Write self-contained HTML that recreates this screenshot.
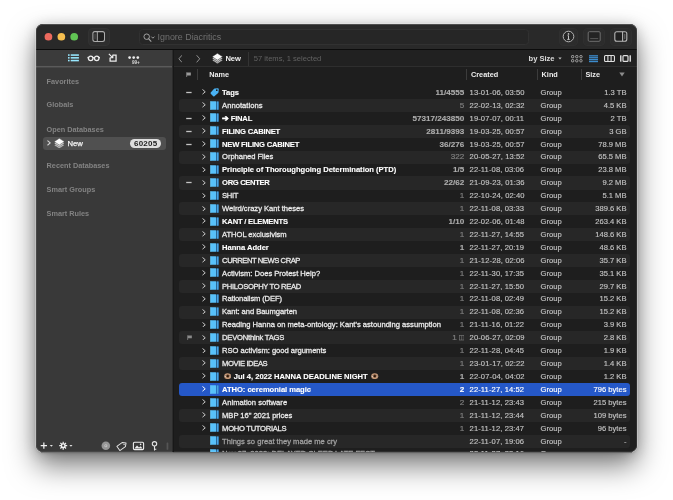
<!DOCTYPE html>
<html lang="en">
<head>
<meta charset="utf-8">
<title>DEVONthink — New</title>
<style>
html,body{margin:0;padding:0;background:#fff;}
body{width:673px;height:500px;overflow:hidden;position:relative;font-family:"Liberation Sans",sans-serif;font-size:7.6px;color:#e6e6e6;-webkit-font-smoothing:antialiased;}
#shadow{position:absolute;left:36px;top:24px;width:601px;height:428px;border-radius:7px;
  box-shadow:0 0 0 0.8px rgba(255,255,255,.38), 0 1px 3px rgba(0,0,0,.18), 0 14px 29px rgba(0,0,0,.50), 0 2px 13px rgba(0,0,0,.19);}
#win{will-change:transform;position:absolute;left:36px;top:24px;width:601px;height:428px;border-radius:7px;overflow:hidden;background:#1e1e1e;}
#title{position:absolute;left:0;top:0;width:601px;height:25px;background:#292929;border-bottom:1px solid #0c0c0c;box-sizing:content-box;}
.tl{position:absolute;top:8.9px;width:7.7px;height:7.7px;border-radius:50%;}
#side{position:absolute;left:0;top:26px;width:136px;height:402px;background:#393939;}
#sidebar-tools{position:absolute;left:0;top:0;width:136px;height:18px;background:linear-gradient(#3b3b3b,#3b3b3b) no-repeat 0 0/100% 16.5px;}
.sec{position:absolute;left:10.6px;font-weight:bold;font-size:7.3px;color:#838383;white-space:nowrap;line-height:10px;}
#main{position:absolute;left:136px;top:26px;width:465px;height:402px;background:#1e1e1e;}
#pathbar{position:absolute;left:0;top:0;width:465px;height:16.3px;background:#212121;box-shadow:0 1px 0 #2e2e2e;}
#hdr{position:absolute;left:0;top:18px;width:465px;height:15px;}
.hd{position:absolute;top:0.4px;line-height:13px;font-weight:bold;font-size:7.3px;color:#ececec;white-space:nowrap;}
.vsep{position:absolute;top:1px;width:1px;height:10.8px;background:#3c3c3c;}
.row{position:absolute;left:143.4px;width:450.4px;height:13.1px;line-height:12.3px;border-radius:3px;white-space:nowrap;color:#eaeaea;}
.row.alt{background:#272727;}
.row.sel{background:#2558c8;color:#fff;}
.row.sel .chev path{stroke:#fff;}
.row.dim{color:#a0a0a0;}
.row.last span{top:0.2px;}
.row span{position:absolute;top:0.85px;}
.dash{position:absolute;left:6.4px;top:4.85px;}
.chev{position:absolute;left:22.9px;top:3.3px;}
.rflag{position:absolute;left:7.2px;top:3.7px;}
.ic{position:absolute;left:30.8px;top:1.6px;}
.grp{width:9px;height:9.4px;top:1.8px !important;background:linear-gradient(90deg,#55b7f3 0,#55b7f3 62%,#2f86cd 62%,#3c97dc 100%);border-radius:1px;}
.nm{left:42.7px;-webkit-text-stroke:0.28px currentColor;}
.nm.b{-webkit-text-stroke:0.12px currentColor;}
.b{font-weight:bold;color:#fff;}
.cnt{right:165.6px;color:#7e7e7e;font-size:8.1px;-webkit-text-stroke:0.2px currentColor;}
.cnt.cb{color:#adadad;font-weight:bold;-webkit-text-stroke:0.12px currentColor;}
.row.sel .cnt{color:#fff;}
.cr{left:290.2px;color:#c2c2c2;letter-spacing:0.1px;-webkit-text-stroke:0.15px currentColor;}
.kd{left:361.2px;color:#c2c2c2;-webkit-text-stroke:0.15px currentColor;}
.sz{right:3.3px;color:#c2c2c2;-webkit-text-stroke:0.15px currentColor;}
.row.sel .cr,.row.sel .kd,.row.sel .sz{color:#fff;}
.eye{vertical-align:-0.5px;margin:0 0.7px 0 1.5px;}
.cbox{vertical-align:-0.4px;margin-left:2px;}
</style>
</head>
<body>
<div id="shadow"></div>
<div style="position:absolute;left:41px;top:452px;width:132px;height:1px;background:rgba(57,57,57,.45)"></div>
<div style="position:absolute;left:173px;top:452px;width:459px;height:1px;background:rgba(30,30,30,.45)"></div>
<div id="win">
  <div id="title">
    <svg style="position:absolute;left:0;top:0" width="50" height="25" viewBox="0 0 50 25"><circle cx="12.45" cy="12.75" r="3.85" fill="#ed6a5e"/><circle cx="25.35" cy="12.75" r="3.85" fill="#f5be4f"/><circle cx="38.2" cy="12.75" r="3.85" fill="#61c454"/></svg>
    <!-- sidebar toggle -->
    <svg style="position:absolute;left:52px;top:4px" width="22" height="18" viewBox="0 0 22 18"><rect x="0.5" y="0.5" width="21" height="17" rx="3.5" fill="#2e2e2e" stroke="#323232"/><rect x="4.9" y="3.6" width="11.6" height="9.8" rx="2" fill="#202020" stroke="#acacac" stroke-width="1.05"/><path d="M9.3 3.6 L9.3 13.4" stroke="#acacac" stroke-width="1.05"/><path d="M7 5.6 L7 11.4" stroke="#6a6a6a" stroke-width="0.8"/></svg>
    <!-- search field -->
    <div style="position:absolute;left:102.8px;top:4.8px;width:390.4px;height:16.2px;border-radius:3.5px;background:#262626;border:1px solid #313131;box-sizing:border-box;"></div>
    <svg style="position:absolute;left:106.6px;top:8.6px" width="14" height="10" viewBox="0 0 14 10"><circle cx="3.7" cy="3.7" r="2.75" fill="none" stroke="#a8a8a8" stroke-width="0.95"/><path d="M5.7 5.8 L8 8.3" stroke="#a8a8a8" stroke-width="1.05" stroke-linecap="round"/><path d="M8.6 3.9 L9.9 5.2 L11.2 3.9" fill="none" stroke="#a8a8a8" stroke-width="0.9" stroke-linecap="round" stroke-linejoin="round"/></svg>
    <span style="position:absolute;left:121.6px;top:6.9px;line-height:12px;font-size:8.9px;color:#707070;white-space:nowrap;">Ignore Diacritics</span>
    <!-- right buttons -->
    <svg style="position:absolute;left:523px;top:4px" width="19" height="18" viewBox="0 0 19 18"><rect x="0.5" y="0.5" width="18" height="17" rx="3.5" fill="#2c2c2c" stroke="#2f2f2f"/><circle cx="9.5" cy="8.5" r="5.3" fill="#262626" stroke="#b4b4b4" stroke-width="1"/><circle cx="9.5" cy="5.9" r="0.85" fill="#c4c4c4"/><path d="M9.5 7.6 L9.5 11.4 M8.3 11.4 L10.7 11.4 M8.6 7.7 L9.5 7.7" stroke="#c4c4c4" stroke-width="1"/></svg>
    <svg style="position:absolute;left:547px;top:4px" width="22" height="18" viewBox="0 0 22 18"><rect x="0.5" y="0.5" width="21" height="17" rx="3.5" fill="#2c2c2c" stroke="#2f2f2f"/><rect x="5.2" y="3.7" width="12" height="9.6" rx="1.2" fill="#232323" stroke="#6e6e6e" stroke-width="1"/><path d="M7.2 10.6 L15.2 10.6" stroke="#5c5c5c" stroke-width="0.9"/></svg>
    <svg style="position:absolute;left:574px;top:4px" width="22" height="18" viewBox="0 0 22 18"><rect x="0.5" y="0.5" width="21" height="17" rx="3.5" fill="#2c2c2c" stroke="#2f2f2f"/><rect x="4.8" y="3.7" width="12" height="9.6" rx="2" fill="#202020" stroke="#b6b6b6" stroke-width="1.1"/><path d="M12.6 3.7 L12.6 13.3" stroke="#b6b6b6" stroke-width="1.1"/><path d="M14.8 5.8 L14.8 11.2" stroke="#7a7a7a" stroke-width="0.9"/></svg>
  </div>

  <div id="side">
    <div id="sidebar-tools">
      <svg style="position:absolute;left:0;top:15px" width="136" height="4" viewBox="0 0 136 4"><rect x="0" y="0.95" width="136" height="1.5" fill="#5a5a5a"/></svg>
      <!-- list icon (active) -->
      <svg style="position:absolute;left:32px;top:3.6px" width="11" height="8" viewBox="0 0 11 8"><g fill="#98e8ff"><rect x="0" y="0.3" width="1.6" height="1.55"/><rect x="2.7" y="0.3" width="8.2" height="1.55"/><rect x="0" y="3.05" width="1.6" height="1.55"/><rect x="2.7" y="3.05" width="8.2" height="1.55"/><rect x="0" y="5.8" width="1.6" height="1.55"/><rect x="2.7" y="5.8" width="8.2" height="1.55"/></g></svg>
      <!-- glasses -->
      <svg style="position:absolute;left:51px;top:3.6px" width="14" height="8" viewBox="0 0 14 8"><g fill="none" stroke="#ececec" stroke-width="1.3"><circle cx="3.7" cy="4.3" r="2.25"/><circle cx="9.7" cy="4.3" r="2.25"/><path d="M5.8 3.9 Q6.7 3.2 7.6 3.9"/><path d="M1.5 3.8 L0.5 3.3 M11.9 3.8 L12.9 3.3"/></g></svg>
      <!-- import -->
      <svg style="position:absolute;left:72.3px;top:2.5px" width="9.6" height="9.6" viewBox="0 0 10 10"><g fill="none" stroke="#ececec" stroke-width="1.35"><path d="M5 2.2 L8.4 2.2 L8.4 8.4 L2.2 8.4 L2.2 5.2"/><path d="M0.9 0.9 L4.6 4.6 M1.8 5 L5 5 L5 1.8" stroke-width="1.2"/></g></svg>
      <!-- dots -->
      <svg style="position:absolute;left:92.2px;top:4.6px" width="13" height="9" viewBox="0 0 13 9"><g fill="#ececec"><circle cx="1.6" cy="2.6" r="1.35"/><circle cx="5.7" cy="2.6" r="1.35"/><circle cx="9.8" cy="2.6" r="1.35"/></g><text x="3.9" y="8.6" font-family="Liberation Sans, sans-serif" font-size="4.6" font-weight="bold" fill="#d8d8d8">99+</text></svg>
    </div>
    <div class="sec" style="top:26.6px">Favorites</div>
    <div class="sec" style="top:50.4px">Globals</div>
    <div class="sec" style="top:75.0px">Open Databases</div>
    <div style="position:absolute;left:6.6px;top:87.2px;width:123.2px;height:12.8px;border-radius:3px;background:#505050;"></div>
    <svg style="position:absolute;left:10.9px;top:90.4px" width="4.2" height="5.8" viewBox="0 0 8 10"><path d="M1.5 1 L6.2 5 L1.5 9" fill="none" stroke="#d4d4d4" stroke-width="2.1" stroke-linecap="round" stroke-linejoin="round"/></svg>
    <!-- db stack icon -->
    <svg style="position:absolute;left:17.7px;top:87.9px" width="10.6" height="10.6" viewBox="0 0 20 20"><g stroke-linejoin="round" stroke="#4c4c4c" stroke-width="1.0"><path d="M10 7.10 L19.9 13.50 L10 19.90 L0.1 13.50 Z" fill="#c8c8c8"/><path d="M10 3.80 L19.9 10.20 L10 16.60 L0.1 10.20 Z" fill="#dadada"/><path d="M10 0.50 L19.9 6.90 L10 13.30 L0.1 6.90 Z" fill="#fbfbfb"/></g></svg>
    <span style="position:absolute;left:31.4px;top:88.1px;line-height:12.8px;font-size:7.7px;color:#f4f4f4;-webkit-text-stroke:0.25px currentColor;white-space:nowrap;">New</span>
    <span style="position:absolute;left:94px;top:89.2px;width:31.4px;height:8.8px;border-radius:4.4px;background:#dedede;color:#1e1e1e;font-weight:bold;font-size:8px;line-height:9.2px;text-align:center;letter-spacing:0.25px;">60205</span>
    <div class="sec" style="top:110.9px">Recent Databases</div>
    <div class="sec" style="top:135.0px">Smart Groups</div>
    <div class="sec" style="top:159.0px">Smart Rules</div>

    <!-- bottom toolbar -->
    <svg style="position:absolute;left:3.6px;top:389.7px" width="130" height="12" viewBox="0 0 130 12">
      <g stroke="#f2f2f2" stroke-width="1.25" fill="none"><path d="M0.7 5.7 L7 5.7 M3.85 2.55 L3.85 8.85"/></g>
      <path d="M9.8 4.9 L12.9 4.9 L11.35 6.8 Z" fill="#e0e0e0"/>
      <g fill="#f0f0f0"><circle cx="23.2" cy="5.7" r="2.5"/><g stroke="#f0f0f0" stroke-width="1.2"><path d="M23.2 1.7 L23.2 9.7 M19.2 5.7 L27.2 5.7 M20.4 2.9 L26 8.5 M26 2.9 L20.4 8.5"/></g></g>
      <circle cx="23.2" cy="5.7" r="1.1" fill="#393939"/>
      <path d="M29.4 4.9 L32.5 4.9 L30.95 6.8 Z" fill="#e0e0e0"/>
      <circle cx="65.85" cy="5.8" r="4.3" fill="#959595"/><circle cx="65.85" cy="5.8" r="1.5" fill="#c6c6c6"/><circle cx="65.85" cy="5.8" r="0.55" fill="#6a6a6a"/>
      <g transform="translate(82.1 5.8) rotate(-35)"><path d="M-4.6 -2.6 L2.2 -2.6 L4.8 0 L2.2 2.6 L-4.6 2.6 Z" fill="none" stroke="#e0e0e0" stroke-width="1" stroke-linejoin="round"/><circle cx="2.4" cy="0" r="0.7" fill="#e0e0e0"/></g>
      <rect x="93.4" y="2.2" width="10.2" height="7.4" rx="1.2" fill="none" stroke="#ececec" stroke-width="1.1"/><path d="M94.4 8.6 L97 5.6 L99 7.4 L100.6 6.2 L102.6 8.6 Z" fill="#ececec"/><circle cx="100.6" cy="4.4" r="0.8" fill="#ececec"/>
      <circle cx="114.5" cy="3.8" r="2.2" fill="none" stroke="#e4e4e4" stroke-width="1.1"/><path d="M114.5 6 L114.5 10.4 M114.5 9.2 L116.3 9.2" stroke="#e4e4e4" stroke-width="1.1"/>
      <rect x="126.6" y="2.4" width="1.7" height="7.4" rx="0.6" fill="#555"/>
    </svg>
  </div>

  <div style="position:absolute;left:136px;top:26px;width:1px;height:402px;background:#2b2b2b;z-index:3"></div>
  <div style="position:absolute;left:137px;top:26px;width:1px;height:402px;background:#181818;z-index:3"></div>
  <div id="main">
    <div id="pathbar">
      <svg style="position:absolute;left:5.6px;top:5px" width="4.6" height="7.6" viewBox="0 0 8 14"><path d="M6.6 1 L1.4 7 L6.6 13" fill="none" stroke="#9a9a9a" stroke-width="1.7" stroke-linecap="round" stroke-linejoin="round"/></svg>
      <svg style="position:absolute;left:24px;top:5px" width="4.6" height="7.6" viewBox="0 0 8 14"><path d="M1.4 1 L6.6 7 L1.4 13" fill="none" stroke="#9a9a9a" stroke-width="1.7" stroke-linecap="round" stroke-linejoin="round"/></svg>
      <svg style="position:absolute;left:40.3px;top:3.1px" width="10.8" height="10.8" viewBox="0 0 20 20"><g stroke-linejoin="round" stroke="#262626" stroke-width="1.0"><path d="M10 7.10 L19.9 13.50 L10 19.90 L0.1 13.50 Z" fill="#c8c8c8"/><path d="M10 3.80 L19.9 10.20 L10 16.60 L0.1 10.20 Z" fill="#dadada"/><path d="M10 0.50 L19.9 6.90 L10 13.30 L0.1 6.90 Z" fill="#fbfbfb"/></g></svg>
      <span style="position:absolute;left:53.4px;top:2.8px;line-height:12px;font-weight:bold;color:#f0f0f0;">New</span>
      <div style="position:absolute;left:75.8px;top:1.5px;width:1px;height:14px;background:#343434;"></div>
      <span style="position:absolute;left:81.8px;top:2.8px;line-height:12px;color:#626262;white-space:nowrap;">57 items, 1 selected</span>
      <span style="position:absolute;left:356.6px;top:2.8px;line-height:12px;font-weight:bold;color:#dcdcdc;letter-spacing:-0.05px;white-space:nowrap;">by Size</span>
      <svg style="position:absolute;left:385.8px;top:7.2px" width="4" height="3" viewBox="0 0 4 3"><path d="M0.3 0.4 L3.7 0.4 L2 2.6 Z" fill="#bdbdbd"/></svg>
      <!-- icon view -->
      <svg style="position:absolute;left:398.8px;top:4.6px" width="12" height="8" viewBox="0 0 12 8"><g fill="none" stroke="#cacaca" stroke-width="0.75"><rect x="0.5" y="0.5" width="2.3" height="2.3" rx="0.8"/><rect x="4.65" y="0.5" width="2.3" height="2.3" rx="0.8"/><rect x="8.8" y="0.5" width="2.3" height="2.3" rx="0.8"/><rect x="0.5" y="4.6" width="2.3" height="2.3" rx="0.8"/><rect x="4.65" y="4.6" width="2.3" height="2.3" rx="0.8"/><rect x="8.8" y="4.6" width="2.3" height="2.3" rx="0.8"/></g></svg>
      <!-- list view active -->
      <svg style="position:absolute;left:416.6px;top:4.8px" width="9.6" height="8" viewBox="0 0 9.6 8"><g fill="#3c8bcc"><rect x="0" y="0.2" width="9.6" height="1.3"/><rect x="0" y="2.1" width="9.6" height="1.3"/><rect x="0" y="4" width="9.6" height="1.3"/><rect x="0" y="5.9" width="9.6" height="1.3"/></g></svg>
      <!-- column view -->
      <svg style="position:absolute;left:431.8px;top:4.9px" width="11" height="7" viewBox="0 0 11 7"><g fill="none" stroke="#e0e0e0" stroke-width="1.1"><rect x="0.55" y="0.55" width="9.9" height="5.9" rx="1"/><path d="M3.9 0.5 L3.9 6.5 M7.1 0.5 L7.1 6.5"/></g></svg>
      <!-- coverflow -->
      <svg style="position:absolute;left:448px;top:4.9px" width="11" height="7" viewBox="0 0 11 7"><rect x="0" y="0.3" width="1.5" height="6.4" fill="#d6d6d6"/><rect x="9.5" y="0.3" width="1.5" height="6.4" fill="#d6d6d6"/><rect x="3" y="0.6" width="5" height="5.8" rx="0.9" fill="none" stroke="#e0e0e0" stroke-width="1.2"/></svg>
    </div>
    <div id="hdr">
      <svg style="position:absolute;left:13.8px;top:3.6px" width="5.4" height="5.9" viewBox="0 0 10 11"><path d="M1.2 0.6 L1.2 10.4" stroke="#9a9a9a" stroke-width="1.4" fill="none"/><path d="M1.6 1 L9 1 L9 6.4 L1.6 6.4 Z" fill="#9a9a9a"/></svg>
      <div class="vsep" style="left:25px"></div>
      <span class="hd" style="left:37.2px">Name</span>
      <div class="vsep" style="left:294.2px"></div>
      <span class="hd" style="left:299px">Created</span>
      <div class="vsep" style="left:365.2px"></div>
      <span class="hd" style="left:369.6px">Kind</span>
      <div class="vsep" style="left:409.2px"></div>
      <span class="hd" style="left:413.4px">Size</span>
      <svg style="position:absolute;left:447.4px;top:4.4px" width="6" height="5" viewBox="0 0 6 5"><path d="M0.3 0.4 L5.7 0.4 L3 4.6 Z" fill="#8c8c8c"/></svg>
    </div>
  </div>
<div class="row" style="top:62.05px"><svg class="dash" width="7" height="3" viewBox="0 0 7 3"><rect x="0.2" y="0.85" width="5.4" height="1.3" fill="#c4c4c4"/></svg><svg class="chev" viewBox="0 0 8 10" width="4.2" height="5.6"><path d="M1.5 1 L6.2 5 L1.5 9" fill="none" stroke="#cccccc" stroke-width="1.9" stroke-linecap="round" stroke-linejoin="round"/></svg><svg class="ic" viewBox="0 0 18 18" width="9" height="9" style="left:30.4px;top:1.9px"><path d="M9.4 1.0 L15.2 0.4 Q17.6 0.2 17.5 2.6 L17.0 8.4 Q16.9 9.3 16.3 9.9 L8.8 16.6 Q7.6 17.6 6.5 16.5 L1.5 11.4 Q0.5 10.3 1.5 9.2 L8.2 1.7 Q8.7 1.1 9.4 1.0 Z" fill="#4ab2f3"/><circle cx="13.6" cy="4.4" r="1.7" fill="#1e1e1e"/></svg><span class="nm b" style="letter-spacing:-0.068px">Tags</span><span class="cnt cb">11/4555</span><span class="cr">13-01-06, 03:50</span><span class="kd">Group</span><span class="sz">1.3 TB</span></div>
<div class="row alt" style="top:74.96px"><svg class="chev" viewBox="0 0 8 10" width="4.2" height="5.6"><path d="M1.5 1 L6.2 5 L1.5 9" fill="none" stroke="#cccccc" stroke-width="1.9" stroke-linecap="round" stroke-linejoin="round"/></svg><svg class="ic" viewBox="0 0 18 18" width="9" height="9"><rect x="0.9" y="0.3" width="11.2" height="17.4" rx="0.9" fill="#58c1fa"/><rect x="0.9" y="0.3" width="1.4" height="17.4" fill="#6fd0ff"/><rect x="12.9" y="0.9" width="4.5" height="16.4" rx="0.6" fill="#3d97da"/><rect x="12.1" y="0.9" width="0.9" height="16.4" fill="#23659f"/><rect x="14.9" y="0.9" width="0.9" height="16.4" fill="#5ab4ec"/><rect x="16.7" y="0.9" width="0.7" height="16.4" fill="#2f7cbc"/></svg><span class="nm" style="letter-spacing:0.026px">Annotations</span><span class="cnt">5</span><span class="cr">22-02-13, 02:32</span><span class="kd">Group</span><span class="sz">4.5 KB</span></div>
<div class="row" style="top:87.87px"><svg class="dash" width="7" height="3" viewBox="0 0 7 3"><rect x="0.2" y="0.85" width="5.4" height="1.3" fill="#c4c4c4"/></svg><svg class="chev" viewBox="0 0 8 10" width="4.2" height="5.6"><path d="M1.5 1 L6.2 5 L1.5 9" fill="none" stroke="#cccccc" stroke-width="1.9" stroke-linecap="round" stroke-linejoin="round"/></svg><svg class="ic" viewBox="0 0 18 18" width="9" height="9"><rect x="0.9" y="0.3" width="11.2" height="17.4" rx="0.9" fill="#58c1fa"/><rect x="0.9" y="0.3" width="1.4" height="17.4" fill="#6fd0ff"/><rect x="12.9" y="0.9" width="4.5" height="16.4" rx="0.6" fill="#3d97da"/><rect x="12.1" y="0.9" width="0.9" height="16.4" fill="#23659f"/><rect x="14.9" y="0.9" width="0.9" height="16.4" fill="#5ab4ec"/><rect x="16.7" y="0.9" width="0.7" height="16.4" fill="#2f7cbc"/></svg><span class="nm b" style="letter-spacing:-0.210px">➔ FINAL</span><span class="cnt cb">57317/243850</span><span class="cr">19-07-07, 00:11</span><span class="kd">Group</span><span class="sz">2 TB</span></div>
<div class="row alt" style="top:100.79px"><svg class="dash" width="7" height="3" viewBox="0 0 7 3"><rect x="0.2" y="0.85" width="5.4" height="1.3" fill="#c4c4c4"/></svg><svg class="chev" viewBox="0 0 8 10" width="4.2" height="5.6"><path d="M1.5 1 L6.2 5 L1.5 9" fill="none" stroke="#cccccc" stroke-width="1.9" stroke-linecap="round" stroke-linejoin="round"/></svg><svg class="ic" viewBox="0 0 18 18" width="9" height="9"><rect x="0.9" y="0.3" width="11.2" height="17.4" rx="0.9" fill="#58c1fa"/><rect x="0.9" y="0.3" width="1.4" height="17.4" fill="#6fd0ff"/><rect x="12.9" y="0.9" width="4.5" height="16.4" rx="0.6" fill="#3d97da"/><rect x="12.1" y="0.9" width="0.9" height="16.4" fill="#23659f"/><rect x="14.9" y="0.9" width="0.9" height="16.4" fill="#5ab4ec"/><rect x="16.7" y="0.9" width="0.7" height="16.4" fill="#2f7cbc"/></svg><span class="nm b" style="letter-spacing:-0.204px">FILING CABINET</span><span class="cnt cb">2811/9393</span><span class="cr">19-03-25, 00:57</span><span class="kd">Group</span><span class="sz">3 GB</span></div>
<div class="row" style="top:113.70px"><svg class="dash" width="7" height="3" viewBox="0 0 7 3"><rect x="0.2" y="0.85" width="5.4" height="1.3" fill="#c4c4c4"/></svg><svg class="chev" viewBox="0 0 8 10" width="4.2" height="5.6"><path d="M1.5 1 L6.2 5 L1.5 9" fill="none" stroke="#cccccc" stroke-width="1.9" stroke-linecap="round" stroke-linejoin="round"/></svg><svg class="ic" viewBox="0 0 18 18" width="9" height="9"><rect x="0.9" y="0.3" width="11.2" height="17.4" rx="0.9" fill="#58c1fa"/><rect x="0.9" y="0.3" width="1.4" height="17.4" fill="#6fd0ff"/><rect x="12.9" y="0.9" width="4.5" height="16.4" rx="0.6" fill="#3d97da"/><rect x="12.1" y="0.9" width="0.9" height="16.4" fill="#23659f"/><rect x="14.9" y="0.9" width="0.9" height="16.4" fill="#5ab4ec"/><rect x="16.7" y="0.9" width="0.7" height="16.4" fill="#2f7cbc"/></svg><span class="nm b" style="letter-spacing:-0.199px">NEW FILING CABINET</span><span class="cnt cb">36/276</span><span class="cr">19-03-25, 00:57</span><span class="kd">Group</span><span class="sz">78.9 MB</span></div>
<div class="row alt" style="top:126.61px"><svg class="chev" viewBox="0 0 8 10" width="4.2" height="5.6"><path d="M1.5 1 L6.2 5 L1.5 9" fill="none" stroke="#cccccc" stroke-width="1.9" stroke-linecap="round" stroke-linejoin="round"/></svg><svg class="ic" viewBox="0 0 18 18" width="9" height="9"><rect x="0.9" y="0.3" width="11.2" height="17.4" rx="0.9" fill="#58c1fa"/><rect x="0.9" y="0.3" width="1.4" height="17.4" fill="#6fd0ff"/><rect x="12.9" y="0.9" width="4.5" height="16.4" rx="0.6" fill="#3d97da"/><rect x="12.1" y="0.9" width="0.9" height="16.4" fill="#23659f"/><rect x="14.9" y="0.9" width="0.9" height="16.4" fill="#5ab4ec"/><rect x="16.7" y="0.9" width="0.7" height="16.4" fill="#2f7cbc"/></svg><span class="nm" style="letter-spacing:-0.059px">Orphaned Files</span><span class="cnt">322</span><span class="cr">20-05-27, 13:52</span><span class="kd">Group</span><span class="sz">65.5 MB</span></div>
<div class="row" style="top:139.52px"><svg class="chev" viewBox="0 0 8 10" width="4.2" height="5.6"><path d="M1.5 1 L6.2 5 L1.5 9" fill="none" stroke="#cccccc" stroke-width="1.9" stroke-linecap="round" stroke-linejoin="round"/></svg><svg class="ic" viewBox="0 0 18 18" width="9" height="9"><rect x="0.9" y="0.3" width="11.2" height="17.4" rx="0.9" fill="#58c1fa"/><rect x="0.9" y="0.3" width="1.4" height="17.4" fill="#6fd0ff"/><rect x="12.9" y="0.9" width="4.5" height="16.4" rx="0.6" fill="#3d97da"/><rect x="12.1" y="0.9" width="0.9" height="16.4" fill="#23659f"/><rect x="14.9" y="0.9" width="0.9" height="16.4" fill="#5ab4ec"/><rect x="16.7" y="0.9" width="0.7" height="16.4" fill="#2f7cbc"/></svg><span class="nm b" style="letter-spacing:-0.021px">Principle of Thoroughgoing Determination (PTD)</span><span class="cnt cb">1/5</span><span class="cr">22-11-08, 03:06</span><span class="kd">Group</span><span class="sz">23.8 MB</span></div>
<div class="row alt" style="top:152.43px"><svg class="dash" width="7" height="3" viewBox="0 0 7 3"><rect x="0.2" y="0.85" width="5.4" height="1.3" fill="#c4c4c4"/></svg><svg class="chev" viewBox="0 0 8 10" width="4.2" height="5.6"><path d="M1.5 1 L6.2 5 L1.5 9" fill="none" stroke="#cccccc" stroke-width="1.9" stroke-linecap="round" stroke-linejoin="round"/></svg><svg class="ic" viewBox="0 0 18 18" width="9" height="9"><rect x="0.9" y="0.3" width="11.2" height="17.4" rx="0.9" fill="#58c1fa"/><rect x="0.9" y="0.3" width="1.4" height="17.4" fill="#6fd0ff"/><rect x="12.9" y="0.9" width="4.5" height="16.4" rx="0.6" fill="#3d97da"/><rect x="12.1" y="0.9" width="0.9" height="16.4" fill="#23659f"/><rect x="14.9" y="0.9" width="0.9" height="16.4" fill="#5ab4ec"/><rect x="16.7" y="0.9" width="0.7" height="16.4" fill="#2f7cbc"/></svg><span class="nm b" style="letter-spacing:-0.334px">ORG CENTER</span><span class="cnt cb">22/62</span><span class="cr">21-09-23, 01:36</span><span class="kd">Group</span><span class="sz">9.2 MB</span></div>
<div class="row" style="top:165.35px"><svg class="chev" viewBox="0 0 8 10" width="4.2" height="5.6"><path d="M1.5 1 L6.2 5 L1.5 9" fill="none" stroke="#cccccc" stroke-width="1.9" stroke-linecap="round" stroke-linejoin="round"/></svg><svg class="ic" viewBox="0 0 18 18" width="9" height="9"><rect x="0.9" y="0.3" width="11.2" height="17.4" rx="0.9" fill="#58c1fa"/><rect x="0.9" y="0.3" width="1.4" height="17.4" fill="#6fd0ff"/><rect x="12.9" y="0.9" width="4.5" height="16.4" rx="0.6" fill="#3d97da"/><rect x="12.1" y="0.9" width="0.9" height="16.4" fill="#23659f"/><rect x="14.9" y="0.9" width="0.9" height="16.4" fill="#5ab4ec"/><rect x="16.7" y="0.9" width="0.7" height="16.4" fill="#2f7cbc"/></svg><span class="nm" style="letter-spacing:-0.328px">SHIT</span><span class="cnt">1</span><span class="cr">22-10-24, 02:40</span><span class="kd">Group</span><span class="sz">5.1 MB</span></div>
<div class="row alt" style="top:178.26px"><svg class="chev" viewBox="0 0 8 10" width="4.2" height="5.6"><path d="M1.5 1 L6.2 5 L1.5 9" fill="none" stroke="#cccccc" stroke-width="1.9" stroke-linecap="round" stroke-linejoin="round"/></svg><svg class="ic" viewBox="0 0 18 18" width="9" height="9"><rect x="0.9" y="0.3" width="11.2" height="17.4" rx="0.9" fill="#58c1fa"/><rect x="0.9" y="0.3" width="1.4" height="17.4" fill="#6fd0ff"/><rect x="12.9" y="0.9" width="4.5" height="16.4" rx="0.6" fill="#3d97da"/><rect x="12.1" y="0.9" width="0.9" height="16.4" fill="#23659f"/><rect x="14.9" y="0.9" width="0.9" height="16.4" fill="#5ab4ec"/><rect x="16.7" y="0.9" width="0.7" height="16.4" fill="#2f7cbc"/></svg><span class="nm" style="letter-spacing:-0.007px">Weird/crazy Kant theses</span><span class="cnt">1</span><span class="cr">22-11-08, 03:33</span><span class="kd">Group</span><span class="sz">389.6 KB</span></div>
<div class="row" style="top:191.17px"><svg class="chev" viewBox="0 0 8 10" width="4.2" height="5.6"><path d="M1.5 1 L6.2 5 L1.5 9" fill="none" stroke="#cccccc" stroke-width="1.9" stroke-linecap="round" stroke-linejoin="round"/></svg><svg class="ic" viewBox="0 0 18 18" width="9" height="9"><rect x="0.9" y="0.3" width="11.2" height="17.4" rx="0.9" fill="#58c1fa"/><rect x="0.9" y="0.3" width="1.4" height="17.4" fill="#6fd0ff"/><rect x="12.9" y="0.9" width="4.5" height="16.4" rx="0.6" fill="#3d97da"/><rect x="12.1" y="0.9" width="0.9" height="16.4" fill="#23659f"/><rect x="14.9" y="0.9" width="0.9" height="16.4" fill="#5ab4ec"/><rect x="16.7" y="0.9" width="0.7" height="16.4" fill="#2f7cbc"/></svg><span class="nm b" style="letter-spacing:-0.205px">KANT / ELEMENTS</span><span class="cnt cb">1/10</span><span class="cr">22-02-06, 01:48</span><span class="kd">Group</span><span class="sz">263.4 KB</span></div>
<div class="row alt" style="top:204.08px"><svg class="chev" viewBox="0 0 8 10" width="4.2" height="5.6"><path d="M1.5 1 L6.2 5 L1.5 9" fill="none" stroke="#cccccc" stroke-width="1.9" stroke-linecap="round" stroke-linejoin="round"/></svg><svg class="ic" viewBox="0 0 18 18" width="9" height="9"><rect x="0.9" y="0.3" width="11.2" height="17.4" rx="0.9" fill="#58c1fa"/><rect x="0.9" y="0.3" width="1.4" height="17.4" fill="#6fd0ff"/><rect x="12.9" y="0.9" width="4.5" height="16.4" rx="0.6" fill="#3d97da"/><rect x="12.1" y="0.9" width="0.9" height="16.4" fill="#23659f"/><rect x="14.9" y="0.9" width="0.9" height="16.4" fill="#5ab4ec"/><rect x="16.7" y="0.9" width="0.7" height="16.4" fill="#2f7cbc"/></svg><span class="nm" style="letter-spacing:-0.053px">ATHOL exclusivism</span><span class="cnt">1</span><span class="cr">22-11-27, 14:55</span><span class="kd">Group</span><span class="sz">148.6 KB</span></div>
<div class="row" style="top:216.99px"><svg class="chev" viewBox="0 0 8 10" width="4.2" height="5.6"><path d="M1.5 1 L6.2 5 L1.5 9" fill="none" stroke="#cccccc" stroke-width="1.9" stroke-linecap="round" stroke-linejoin="round"/></svg><svg class="ic" viewBox="0 0 18 18" width="9" height="9"><rect x="0.9" y="0.3" width="11.2" height="17.4" rx="0.9" fill="#58c1fa"/><rect x="0.9" y="0.3" width="1.4" height="17.4" fill="#6fd0ff"/><rect x="12.9" y="0.9" width="4.5" height="16.4" rx="0.6" fill="#3d97da"/><rect x="12.1" y="0.9" width="0.9" height="16.4" fill="#23659f"/><rect x="14.9" y="0.9" width="0.9" height="16.4" fill="#5ab4ec"/><rect x="16.7" y="0.9" width="0.7" height="16.4" fill="#2f7cbc"/></svg><span class="nm b" style="letter-spacing:-0.026px">Hanna Adder</span><span class="cnt cb">1</span><span class="cr">22-11-27, 20:19</span><span class="kd">Group</span><span class="sz">48.6 KB</span></div>
<div class="row alt" style="top:229.91px"><svg class="chev" viewBox="0 0 8 10" width="4.2" height="5.6"><path d="M1.5 1 L6.2 5 L1.5 9" fill="none" stroke="#cccccc" stroke-width="1.9" stroke-linecap="round" stroke-linejoin="round"/></svg><svg class="ic" viewBox="0 0 18 18" width="9" height="9"><rect x="0.9" y="0.3" width="11.2" height="17.4" rx="0.9" fill="#58c1fa"/><rect x="0.9" y="0.3" width="1.4" height="17.4" fill="#6fd0ff"/><rect x="12.9" y="0.9" width="4.5" height="16.4" rx="0.6" fill="#3d97da"/><rect x="12.1" y="0.9" width="0.9" height="16.4" fill="#23659f"/><rect x="14.9" y="0.9" width="0.9" height="16.4" fill="#5ab4ec"/><rect x="16.7" y="0.9" width="0.7" height="16.4" fill="#2f7cbc"/></svg><span class="nm" style="letter-spacing:-0.423px">CURRENT NEWS CRAP</span><span class="cnt">1</span><span class="cr">21-12-28, 02:06</span><span class="kd">Group</span><span class="sz">35.7 KB</span></div>
<div class="row" style="top:242.82px"><svg class="chev" viewBox="0 0 8 10" width="4.2" height="5.6"><path d="M1.5 1 L6.2 5 L1.5 9" fill="none" stroke="#cccccc" stroke-width="1.9" stroke-linecap="round" stroke-linejoin="round"/></svg><svg class="ic" viewBox="0 0 18 18" width="9" height="9"><rect x="0.9" y="0.3" width="11.2" height="17.4" rx="0.9" fill="#58c1fa"/><rect x="0.9" y="0.3" width="1.4" height="17.4" fill="#6fd0ff"/><rect x="12.9" y="0.9" width="4.5" height="16.4" rx="0.6" fill="#3d97da"/><rect x="12.1" y="0.9" width="0.9" height="16.4" fill="#23659f"/><rect x="14.9" y="0.9" width="0.9" height="16.4" fill="#5ab4ec"/><rect x="16.7" y="0.9" width="0.7" height="16.4" fill="#2f7cbc"/></svg><span class="nm" style="letter-spacing:-0.009px">Activism: Does Protest Help?</span><span class="cnt">1</span><span class="cr">22-11-30, 17:35</span><span class="kd">Group</span><span class="sz">35.1 KB</span></div>
<div class="row alt" style="top:255.73px"><svg class="chev" viewBox="0 0 8 10" width="4.2" height="5.6"><path d="M1.5 1 L6.2 5 L1.5 9" fill="none" stroke="#cccccc" stroke-width="1.9" stroke-linecap="round" stroke-linejoin="round"/></svg><svg class="ic" viewBox="0 0 18 18" width="9" height="9"><rect x="0.9" y="0.3" width="11.2" height="17.4" rx="0.9" fill="#58c1fa"/><rect x="0.9" y="0.3" width="1.4" height="17.4" fill="#6fd0ff"/><rect x="12.9" y="0.9" width="4.5" height="16.4" rx="0.6" fill="#3d97da"/><rect x="12.1" y="0.9" width="0.9" height="16.4" fill="#23659f"/><rect x="14.9" y="0.9" width="0.9" height="16.4" fill="#5ab4ec"/><rect x="16.7" y="0.9" width="0.7" height="16.4" fill="#2f7cbc"/></svg><span class="nm" style="letter-spacing:-0.335px">PHILOSOPHY TO READ</span><span class="cnt">1</span><span class="cr">22-11-27, 15:50</span><span class="kd">Group</span><span class="sz">29.7 KB</span></div>
<div class="row" style="top:268.64px"><svg class="chev" viewBox="0 0 8 10" width="4.2" height="5.6"><path d="M1.5 1 L6.2 5 L1.5 9" fill="none" stroke="#cccccc" stroke-width="1.9" stroke-linecap="round" stroke-linejoin="round"/></svg><svg class="ic" viewBox="0 0 18 18" width="9" height="9"><rect x="0.9" y="0.3" width="11.2" height="17.4" rx="0.9" fill="#58c1fa"/><rect x="0.9" y="0.3" width="1.4" height="17.4" fill="#6fd0ff"/><rect x="12.9" y="0.9" width="4.5" height="16.4" rx="0.6" fill="#3d97da"/><rect x="12.1" y="0.9" width="0.9" height="16.4" fill="#23659f"/><rect x="14.9" y="0.9" width="0.9" height="16.4" fill="#5ab4ec"/><rect x="16.7" y="0.9" width="0.7" height="16.4" fill="#2f7cbc"/></svg><span class="nm" style="letter-spacing:-0.137px">Rationalism (DEF)</span><span class="cnt">1</span><span class="cr">22-11-08, 02:49</span><span class="kd">Group</span><span class="sz">15.2 KB</span></div>
<div class="row alt" style="top:281.55px"><svg class="chev" viewBox="0 0 8 10" width="4.2" height="5.6"><path d="M1.5 1 L6.2 5 L1.5 9" fill="none" stroke="#cccccc" stroke-width="1.9" stroke-linecap="round" stroke-linejoin="round"/></svg><svg class="ic" viewBox="0 0 18 18" width="9" height="9"><rect x="0.9" y="0.3" width="11.2" height="17.4" rx="0.9" fill="#58c1fa"/><rect x="0.9" y="0.3" width="1.4" height="17.4" fill="#6fd0ff"/><rect x="12.9" y="0.9" width="4.5" height="16.4" rx="0.6" fill="#3d97da"/><rect x="12.1" y="0.9" width="0.9" height="16.4" fill="#23659f"/><rect x="14.9" y="0.9" width="0.9" height="16.4" fill="#5ab4ec"/><rect x="16.7" y="0.9" width="0.7" height="16.4" fill="#2f7cbc"/></svg><span class="nm" style="letter-spacing:-0.055px">Kant: and Baumgarten</span><span class="cnt">1</span><span class="cr">22-11-08, 02:36</span><span class="kd">Group</span><span class="sz">15.2 KB</span></div>
<div class="row" style="top:294.47px"><svg class="chev" viewBox="0 0 8 10" width="4.2" height="5.6"><path d="M1.5 1 L6.2 5 L1.5 9" fill="none" stroke="#cccccc" stroke-width="1.9" stroke-linecap="round" stroke-linejoin="round"/></svg><svg class="ic" viewBox="0 0 18 18" width="9" height="9"><rect x="0.9" y="0.3" width="11.2" height="17.4" rx="0.9" fill="#58c1fa"/><rect x="0.9" y="0.3" width="1.4" height="17.4" fill="#6fd0ff"/><rect x="12.9" y="0.9" width="4.5" height="16.4" rx="0.6" fill="#3d97da"/><rect x="12.1" y="0.9" width="0.9" height="16.4" fill="#23659f"/><rect x="14.9" y="0.9" width="0.9" height="16.4" fill="#5ab4ec"/><rect x="16.7" y="0.9" width="0.7" height="16.4" fill="#2f7cbc"/></svg><span class="nm">Reading Hanna on meta-ontology: Kant's astounding assumption</span><span class="cnt">1</span><span class="cr">21-11-16, 01:22</span><span class="kd">Group</span><span class="sz">3.9 KB</span></div>
<div class="row alt" style="top:307.38px"><svg class="rflag" viewBox="0 0 10 10" width="5.4" height="5.4"><path d="M1.2 0.6 L1.2 9.6" stroke="#8a8a8a" stroke-width="1.4" fill="none"/><path d="M1.6 1 L9 1 L9 6 L1.6 6 Z" fill="#8a8a8a"/></svg><svg class="chev" viewBox="0 0 8 10" width="4.2" height="5.6"><path d="M1.5 1 L6.2 5 L1.5 9" fill="none" stroke="#cccccc" stroke-width="1.9" stroke-linecap="round" stroke-linejoin="round"/></svg><svg class="ic" viewBox="0 0 18 18" width="9" height="9"><rect x="0.9" y="0.3" width="11.2" height="17.4" rx="0.9" fill="#58c1fa"/><rect x="0.9" y="0.3" width="1.4" height="17.4" fill="#6fd0ff"/><rect x="12.9" y="0.9" width="4.5" height="16.4" rx="0.6" fill="#3d97da"/><rect x="12.1" y="0.9" width="0.9" height="16.4" fill="#23659f"/><rect x="14.9" y="0.9" width="0.9" height="16.4" fill="#5ab4ec"/><rect x="16.7" y="0.9" width="0.7" height="16.4" fill="#2f7cbc"/></svg><span class="nm" style="letter-spacing:-0.203px">DEVONthink TAGS</span><span class="cnt">1<svg class="cbox" viewBox="0 0 10 10" width="5.4" height="5.4"><rect x="0.7" y="0.7" width="8.6" height="8.6" fill="none" stroke="#777" stroke-width="1.2"/><path d="M5 0.7 L5 9.3" stroke="#777" stroke-width="1.2"/></svg></span><span class="cr">20-06-27, 02:09</span><span class="kd">Group</span><span class="sz">2.8 KB</span></div>
<div class="row" style="top:320.29px"><svg class="chev" viewBox="0 0 8 10" width="4.2" height="5.6"><path d="M1.5 1 L6.2 5 L1.5 9" fill="none" stroke="#cccccc" stroke-width="1.9" stroke-linecap="round" stroke-linejoin="round"/></svg><svg class="ic" viewBox="0 0 18 18" width="9" height="9"><rect x="0.9" y="0.3" width="11.2" height="17.4" rx="0.9" fill="#58c1fa"/><rect x="0.9" y="0.3" width="1.4" height="17.4" fill="#6fd0ff"/><rect x="12.9" y="0.9" width="4.5" height="16.4" rx="0.6" fill="#3d97da"/><rect x="12.1" y="0.9" width="0.9" height="16.4" fill="#23659f"/><rect x="14.9" y="0.9" width="0.9" height="16.4" fill="#5ab4ec"/><rect x="16.7" y="0.9" width="0.7" height="16.4" fill="#2f7cbc"/></svg><span class="nm" style="letter-spacing:-0.028px">RSO activism: good arguments</span><span class="cnt">1</span><span class="cr">22-11-28, 04:45</span><span class="kd">Group</span><span class="sz">1.9 KB</span></div>
<div class="row alt" style="top:333.20px"><svg class="chev" viewBox="0 0 8 10" width="4.2" height="5.6"><path d="M1.5 1 L6.2 5 L1.5 9" fill="none" stroke="#cccccc" stroke-width="1.9" stroke-linecap="round" stroke-linejoin="round"/></svg><svg class="ic" viewBox="0 0 18 18" width="9" height="9"><rect x="0.9" y="0.3" width="11.2" height="17.4" rx="0.9" fill="#58c1fa"/><rect x="0.9" y="0.3" width="1.4" height="17.4" fill="#6fd0ff"/><rect x="12.9" y="0.9" width="4.5" height="16.4" rx="0.6" fill="#3d97da"/><rect x="12.1" y="0.9" width="0.9" height="16.4" fill="#23659f"/><rect x="14.9" y="0.9" width="0.9" height="16.4" fill="#5ab4ec"/><rect x="16.7" y="0.9" width="0.7" height="16.4" fill="#2f7cbc"/></svg><span class="nm" style="letter-spacing:-0.380px">MOVIE IDEAS</span><span class="cnt">1</span><span class="cr">23-01-17, 02:22</span><span class="kd">Group</span><span class="sz">1.4 KB</span></div>
<div class="row" style="top:346.11px"><svg class="chev" viewBox="0 0 8 10" width="4.2" height="5.6"><path d="M1.5 1 L6.2 5 L1.5 9" fill="none" stroke="#cccccc" stroke-width="1.9" stroke-linecap="round" stroke-linejoin="round"/></svg><svg class="ic" viewBox="0 0 18 18" width="9" height="9"><rect x="0.9" y="0.3" width="11.2" height="17.4" rx="0.9" fill="#58c1fa"/><rect x="0.9" y="0.3" width="1.4" height="17.4" fill="#6fd0ff"/><rect x="12.9" y="0.9" width="4.5" height="16.4" rx="0.6" fill="#3d97da"/><rect x="12.1" y="0.9" width="0.9" height="16.4" fill="#23659f"/><rect x="14.9" y="0.9" width="0.9" height="16.4" fill="#5ab4ec"/><rect x="16.7" y="0.9" width="0.7" height="16.4" fill="#2f7cbc"/></svg><span class="nm b" style="letter-spacing:-0.014px"><svg class="eye" viewBox="0 0 14 12" width="7.4" height="6.3"><ellipse cx="7" cy="6" rx="6.8" ry="5.6" fill="#c89a78"/><path d="M0.8 6.2 Q7 0.6 13.2 6.2 Q7 11.2 0.8 6.2 Z" fill="#f3ece6"/><circle cx="7.2" cy="6" r="3.1" fill="#6b3d1c"/><circle cx="7.2" cy="6" r="1.5" fill="#120c08"/><path d="M0.8 6.2 Q7 0.6 13.2 6.2" fill="none" stroke="#4a2c18" stroke-width="1"/></svg> Jul 4, 2022 HANNA DEADLINE NIGHT <svg class="eye" viewBox="0 0 14 12" width="7.4" height="6.3"><ellipse cx="7" cy="6" rx="6.8" ry="5.6" fill="#c89a78"/><path d="M0.8 6.2 Q7 0.6 13.2 6.2 Q7 11.2 0.8 6.2 Z" fill="#f3ece6"/><circle cx="7.2" cy="6" r="3.1" fill="#6b3d1c"/><circle cx="7.2" cy="6" r="1.5" fill="#120c08"/><path d="M0.8 6.2 Q7 0.6 13.2 6.2" fill="none" stroke="#4a2c18" stroke-width="1"/></svg></span><span class="cnt cb">1</span><span class="cr">22-07-04, 04:02</span><span class="kd">Group</span><span class="sz">1.2 KB</span></div>
<div class="row alt sel" style="top:359.03px"><svg class="chev" viewBox="0 0 8 10" width="4.2" height="5.6"><path d="M1.5 1 L6.2 5 L1.5 9" fill="none" stroke="#cccccc" stroke-width="1.9" stroke-linecap="round" stroke-linejoin="round"/></svg><svg class="ic" viewBox="0 0 18 18" width="9" height="9"><rect x="0.9" y="0.3" width="11.2" height="17.4" rx="0.9" fill="#58c1fa"/><rect x="0.9" y="0.3" width="1.4" height="17.4" fill="#6fd0ff"/><rect x="12.9" y="0.9" width="4.5" height="16.4" rx="0.6" fill="#3d97da"/><rect x="12.1" y="0.9" width="0.9" height="16.4" fill="#23659f"/><rect x="14.9" y="0.9" width="0.9" height="16.4" fill="#5ab4ec"/><rect x="16.7" y="0.9" width="0.7" height="16.4" fill="#2f7cbc"/></svg><span class="nm b" style="letter-spacing:-0.039px">ATHO: ceremonial magic</span><span class="cnt cb">2</span><span class="cr">22-11-27, 14:52</span><span class="kd">Group</span><span class="sz">796 bytes</span></div>
<div class="row" style="top:371.94px"><svg class="chev" viewBox="0 0 8 10" width="4.2" height="5.6"><path d="M1.5 1 L6.2 5 L1.5 9" fill="none" stroke="#cccccc" stroke-width="1.9" stroke-linecap="round" stroke-linejoin="round"/></svg><svg class="ic" viewBox="0 0 18 18" width="9" height="9"><rect x="0.9" y="0.3" width="11.2" height="17.4" rx="0.9" fill="#58c1fa"/><rect x="0.9" y="0.3" width="1.4" height="17.4" fill="#6fd0ff"/><rect x="12.9" y="0.9" width="4.5" height="16.4" rx="0.6" fill="#3d97da"/><rect x="12.1" y="0.9" width="0.9" height="16.4" fill="#23659f"/><rect x="14.9" y="0.9" width="0.9" height="16.4" fill="#5ab4ec"/><rect x="16.7" y="0.9" width="0.7" height="16.4" fill="#2f7cbc"/></svg><span class="nm" style="letter-spacing:0.029px">Animation software</span><span class="cnt">2</span><span class="cr">21-11-12, 23:43</span><span class="kd">Group</span><span class="sz">215 bytes</span></div>
<div class="row alt" style="top:384.85px"><svg class="chev" viewBox="0 0 8 10" width="4.2" height="5.6"><path d="M1.5 1 L6.2 5 L1.5 9" fill="none" stroke="#cccccc" stroke-width="1.9" stroke-linecap="round" stroke-linejoin="round"/></svg><svg class="ic" viewBox="0 0 18 18" width="9" height="9"><rect x="0.9" y="0.3" width="11.2" height="17.4" rx="0.9" fill="#58c1fa"/><rect x="0.9" y="0.3" width="1.4" height="17.4" fill="#6fd0ff"/><rect x="12.9" y="0.9" width="4.5" height="16.4" rx="0.6" fill="#3d97da"/><rect x="12.1" y="0.9" width="0.9" height="16.4" fill="#23659f"/><rect x="14.9" y="0.9" width="0.9" height="16.4" fill="#5ab4ec"/><rect x="16.7" y="0.9" width="0.7" height="16.4" fill="#2f7cbc"/></svg><span class="nm" style="letter-spacing:-0.045px">MBP 16" 2021 prices</span><span class="cnt">1</span><span class="cr">21-11-12, 23:44</span><span class="kd">Group</span><span class="sz">109 bytes</span></div>
<div class="row" style="top:397.76px"><svg class="chev" viewBox="0 0 8 10" width="4.2" height="5.6"><path d="M1.5 1 L6.2 5 L1.5 9" fill="none" stroke="#cccccc" stroke-width="1.9" stroke-linecap="round" stroke-linejoin="round"/></svg><svg class="ic" viewBox="0 0 18 18" width="9" height="9"><rect x="0.9" y="0.3" width="11.2" height="17.4" rx="0.9" fill="#58c1fa"/><rect x="0.9" y="0.3" width="1.4" height="17.4" fill="#6fd0ff"/><rect x="12.9" y="0.9" width="4.5" height="16.4" rx="0.6" fill="#3d97da"/><rect x="12.1" y="0.9" width="0.9" height="16.4" fill="#23659f"/><rect x="14.9" y="0.9" width="0.9" height="16.4" fill="#5ab4ec"/><rect x="16.7" y="0.9" width="0.7" height="16.4" fill="#2f7cbc"/></svg><span class="nm" style="letter-spacing:-0.277px">MOHO TUTORIALS</span><span class="cnt">1</span><span class="cr">21-11-12, 23:47</span><span class="kd">Group</span><span class="sz">96 bytes</span></div>
<div class="row alt dim" style="top:410.67px"><svg class="ic" viewBox="0 0 18 18" width="9" height="9"><rect x="0.9" y="0.3" width="11.2" height="17.4" rx="0.9" fill="#58c1fa"/><rect x="0.9" y="0.3" width="1.4" height="17.4" fill="#6fd0ff"/><rect x="12.9" y="0.9" width="4.5" height="16.4" rx="0.6" fill="#3d97da"/><rect x="12.1" y="0.9" width="0.9" height="16.4" fill="#23659f"/><rect x="14.9" y="0.9" width="0.9" height="16.4" fill="#5ab4ec"/><rect x="16.7" y="0.9" width="0.7" height="16.4" fill="#2f7cbc"/></svg><span class="nm" style="letter-spacing:0.006px">Things so great they made me cry</span><span class="cr">22-11-07, 19:06</span><span class="kd">Group</span><span class="sz">-</span></div>
<div class="row dim last" style="top:423.59px"><svg class="ic" viewBox="0 0 18 18" width="9" height="9"><rect x="0.9" y="0.3" width="11.2" height="17.4" rx="0.9" fill="#58c1fa"/><rect x="0.9" y="0.3" width="1.4" height="17.4" fill="#6fd0ff"/><rect x="12.9" y="0.9" width="4.5" height="16.4" rx="0.6" fill="#3d97da"/><rect x="12.1" y="0.9" width="0.9" height="16.4" fill="#23659f"/><rect x="14.9" y="0.9" width="0.9" height="16.4" fill="#5ab4ec"/><rect x="16.7" y="0.9" width="0.7" height="16.4" fill="#2f7cbc"/></svg><span class="nm">Nov 27, 2022: DELAYED SLEEP LATE FEST</span><span class="cr">22-11-27, 23:16</span><span class="kd">Group</span><span class="sz">-</span></div>
<div style="position:absolute;left:0;top:0;width:601px;height:428px;border-radius:7px;box-sizing:border-box;box-shadow:inset 0 0 0 0.6px rgba(255,255,255,0.14), inset 0 1px 0 rgba(255,255,255,0.12);pointer-events:none;"></div>
</div>
</body>
</html>
